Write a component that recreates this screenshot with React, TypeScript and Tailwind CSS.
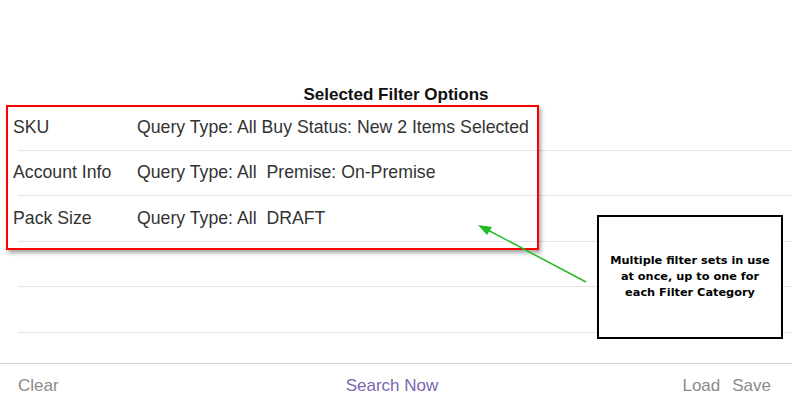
import React from 'react';

const rows = [
  { label: 'SKU', value: 'Query Type: All Buy Status: New 2 Items Selected' },
  { label: 'Account Info', value: 'Query Type: All  Premise: On-Premise' },
  { label: 'Pack Size', value: 'Query Type: All  DRAFT' },
  { label: '', value: '' },
  { label: '', value: '' },
];

export default function App() {
  return (
    <div className="relative w-[792px] h-[404px] bg-white overflow-hidden font-['Liberation_Sans',Arial,sans-serif]">
      <div className="flex flex-col h-full">
        {/* Title */}
        <div className="pt-[85px] h-[105px] text-center text-[17px] font-bold leading-[19px] text-[#111]">
          Selected Filter Options
        </div>

        {/* Filter rows */}
        <div className="flex-1">
          {rows.map((row, i) => (
            <div key={i} className="pl-[18px] h-[45.5px]">
              <div className="flex items-center h-full border-b border-[#e4e4e4] text-[17.7px] text-[#333]">
                <span className="w-[124px] -ml-[5px] whitespace-pre">{row.label}</span>
                <span className="whitespace-pre">{row.value}</span>
              </div>
            </div>
          ))}
        </div>

        {/* Footer */}
        <div className="h-[41px] border-t border-[#cfcfcf] grid grid-cols-3 items-center px-[18px] pt-[4px] text-[17px]">
          <span className="text-[#8a8a8a]">Clear</span>
          <span className="text-center pr-[8px] text-[#7a68b0]">Search Now</span>
          <div className="flex justify-end gap-[12px] mr-[3px] text-[#8a8a8a]">
            <span>Load</span>
            <span>Save</span>
          </div>
        </div>
      </div>

      {/* Annotation: red highlight */}
      <div className="absolute left-[6px] top-[105px] w-[533px] h-[145px] border-2 border-[#ff0000] shadow-[2px_3px_4px_rgba(0,0,0,0.35)]" />

      {/* Annotation: arrow */}
      <svg className="absolute left-0 top-0" width="792" height="404">
        <line x1="586" y1="282" x2="484" y2="228" stroke="#22bb22" strokeWidth="1.5" />
        <polygon points="478,225 492,227 487,235" fill="#22bb22" />
      </svg>

      {/* Annotation: callout */}
      <div className="absolute left-[597px] top-[215px] w-[186px] h-[124px] border-2 border-black bg-white flex items-center justify-center text-center font-['DejaVu_Sans',Tahoma,sans-serif] font-bold text-[11.3px] leading-[16px] text-black">
        <div>
          Multiple filter sets in use
          <br />
          at once, up to one for
          <br />
          each Filter Category
        </div>
      </div>
    </div>
  );
}
